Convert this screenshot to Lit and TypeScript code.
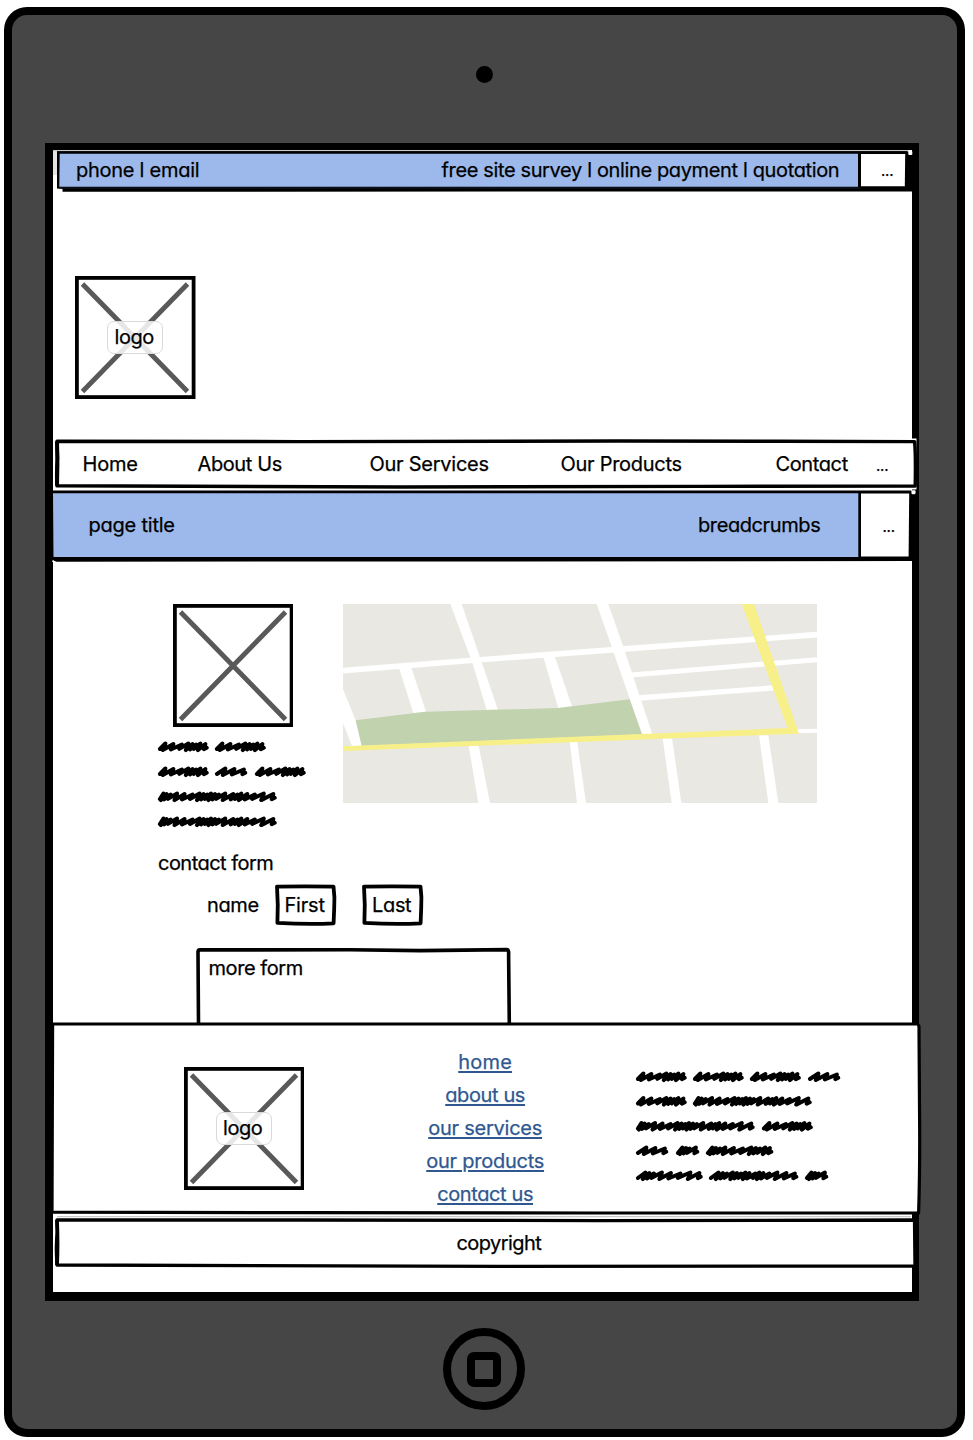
import { LitElement, html, svg, css } from "lit";
import { customElement, property } from "lit/decorators.js";

/* One line of wireframe text, spaced so that it fills the given width. */
@customElement("wf-label")
class WfLabel extends LitElement {
  @property() text = "";
  @property({ type: Number }) w = 0;
  @property({ type: Boolean }) link = false;

  static styles = css`
    :host {
      display: block;
      flex: none;
      font-family: Inter, "Open Sans", sans-serif;
      font-feature-settings: "cv11", "calt" 0;
      font-size: 20px;
      line-height: 24px;
      white-space: pre;
      -webkit-text-stroke: 0.25px currentColor;
    }
    .text {
      display: inline-block;
      vertical-align: top;
    }
    .link {
      text-decoration: underline;
      text-decoration-thickness: 1.6px;
      text-underline-offset: 1.8px;
    }
  `;

  render() {
    return html`<span class="text ${this.link ? "link" : ""}">${this.text}</span>`;
  }

  updated() {
    const span = this.renderRoot.querySelector(".text") as HTMLElement;
    span.style.letterSpacing = "0px";
    const natural = span.getBoundingClientRect().width;
    const gap = (this.w + 0.3 - natural) / this.text.length;
    span.style.letterSpacing = `${gap.toFixed(3)}px`;
    this.style.width = `${this.w}px`;
  }
}

/* Crossed image placeholder with an optional caption. */
@customElement("wf-image")
class WfImage extends LitElement {
  @property() caption = "";

  static styles = css`
    :host {
      display: grid;
      flex: none;
      width: 120.5px;
      height: 123px;
      place-items: center;
    }
    .art,
    .tag {
      grid-area: 1 / 1;
    }
    .art {
      display: block;
    }
    .tag {
      box-sizing: border-box;
      width: 56px;
      height: 33px;
      margin: 0 0.5px 0 0;
      padding: 3px 0 0 6.5px;
      border: 1.5px solid #d9d9d9;
      border-radius: 7px;
      background: rgba(255, 255, 255, 0.85);
    }
  `;

  render() {
    return html`
      <svg class="art" width="120.5" height="123" viewBox="0 0 120.5 123">
        <rect x="1.9" y="1.9" width="116.7" height="119.2" fill="#fff" stroke="#000" stroke-width="3.8" />
        <path d="M7.5 8L112.5 115.5M112.5 8L7.5 115.5" stroke="#595959" stroke-width="4.9" />
      </svg>
      ${this.caption
        ? html`<div class="tag"><wf-label text=${this.caption} .w=${39}></wf-label></div>`
        : ""}
    `;
  }
}

/* Spacing between successive pen strokes for each scribbled word length. */
const WORDS: Record<string, number[]> = {
  xs: [8, 3.6, 3.6, 6.3],
  s: [12, 9, 9.5],
  m: [9, 8, 8.5, 6.5, 4.2, 3.6, 4.2, 5],
  l: [11, 4, 4.5, 8, 9, 9.5, 10, 9],
  xl: [8, 3.5, 4, 5.5, 8.5, 9, 8.5, 4.5, 4, 5.5, 4.5],
  xxl: [11, 4.5, 4, 6, 4, 4, 4.5, 4, 6, 4, 4, 6, 8, 9, 8.5],
  xxxl: [7, 3.2, 4, 6.5, 7.5, 8, 7, 4, 3.6, 3.8, 4, 3.8, 6.5, 8, 4, 4, 6, 7.5, 9, 9.5],
};

const scribble = (kind: string, x: number, y: number) => {
  const base = y - 0.2;
  let peak = x;
  let d = `M${x + 1.9} ${base + 2.2}`;
  WORDS[kind].forEach((step, i) => {
    peak += step;
    const tip = peak - 1.6;
    const top = base - 3.3 + ((i * 7) % 3) * 0.5;
    const low = base + 2.1 + ((i * 5) % 3) * 0.6;
    if (i > 0) {
      const back = Math.max(x + 2.2, tip - step - 2.6);
      d += `Q${tip - step - 0.5} ${base} ${back} ${low}`;
    }
    d += `L${tip} ${top}`;
  });
  d += `L${peak - 3.2} ${base + 2.4}L${peak - 0.2} ${base + 1}`;
  return svg`<path d=${d} />`;
};

@customElement("app-root")
class AppRoot extends LitElement {
  static styles = css`
    :host {
      display: block;
      width: 973px;
      height: 1440px;
      overflow: hidden;
      background: #fff;
      color: #000;
    }
    .device {
      box-sizing: border-box;
      display: flex;
      flex-direction: column;
      align-items: flex-start;
      width: 960.5px;
      height: 1430px;
      margin: 7px 0 0 4px;
      border: 8px solid #000;
      border-radius: 23px;
      background: #464646;
    }
    .top {
      box-sizing: border-box;
      height: 128px;
      padding: 51px 0 0 463.5px;
    }
    .camera {
      width: 17px;
      height: 17px;
      border-radius: 50%;
      background: #000;
    }
    .screen {
      box-sizing: border-box;
      flex: none;
      display: flex;
      flex-direction: column;
      align-items: flex-start;
      width: 873.5px;
      height: 1158px;
      margin-left: 33px;
      border: solid #000;
      border-width: 7px 7.5px 9px 8px;
      background: #fff;
    }
    .bottom {
      padding: 27px 0 0 431px;
    }
    .home {
      box-sizing: border-box;
      display: grid;
      place-items: center;
      width: 82px;
      height: 82px;
      border: 8px solid #000;
      border-radius: 50%;
    }
    .square {
      box-sizing: border-box;
      width: 34px;
      height: 35px;
      border: 8px solid #000;
      border-radius: 7px;
    }
    .stack {
      flex: none;
      display: grid;
      width: 868px;
    }
    .stack > * {
      grid-area: 1 / 1;
    }
    .art {
      display: block;
      overflow: visible;
    }
    .map {
      overflow: hidden;
    }
    .row {
      display: flex;
      align-items: flex-start;
    }
    .util {
      padding: 8px 0 0 23px;
    }
    .util .right {
      margin-left: 242.5px;
    }
    .dots {
      font-size: 15px;
    }
    .util .dots {
      margin-left: 42px;
      padding-top: 1px;
    }
    .header {
      flex: none;
      height: 247px;
      padding: 84px 0 0 22px;
      box-sizing: border-box;
    }
    .nav {
      padding: 13px 0 0 29.5px;
    }
    .n1 { margin-left: 60px; }
    .n2 { margin-left: 88px; }
    .n3 { margin-left: 72px; }
    .n4 { margin-left: 94px; }
    .nav .dots { margin-left: 28.5px; padding-top: 2px; }
    .title {
      padding: 24px 0 0 35.5px;
    }
    .title .right { margin-left: 523.5px; }
    .title .dots { margin-left: 62.5px; padding-top: 2px; }
    .main {
      box-sizing: border-box;
      flex: none;
      height: 460px;
      padding: 42px 0 0 105px;
    }
    .media {
      gap: 37px;
    }
    .about wf-image {
      margin-left: 14.5px;
    }
    .about {
      width: 148px;
    }
    .contact {
      margin-top: 15px;
    }
    .names {
      margin: 9px 0 0 49px;
      align-items: flex-start;
    }
    .names > wf-label {
      padding-top: 9px;
    }
    .field {
      display: grid;
      width: 61px;
      height: 42px;
    }
    .field > * {
      grid-area: 1 / 1;
    }
    .field wf-label {
      padding: 9px 0 0 10px;
    }
    .first { margin-left: 16px; }
    .last { margin-left: 26.5px; }
    .more {
      display: grid;
      width: 315px;
      margin: 21px 0 0 38px;
    }
    .more > * {
      grid-area: 1 / 1;
    }
    .more wf-label {
      padding: 9px 0 0 12.5px;
    }
    .footer {
      padding: 44.5px 0 0 130.5px;
    }
    .links {
      display: flex;
      flex-direction: column;
      align-items: center;
      width: 118px;
      gap: 9px;
      margin: -16.5px 0 0 122px;
      color: #2f5890;
    }
    .address {
      margin: -0.5px 0 0 91.5px;
    }
    .pen {
      fill: none;
      stroke: #000;
      stroke-width: 4;
      stroke-linecap: round;
      stroke-linejoin: round;
    }
    .copy {
      padding: 13px 0 0 403.5px;
    }
  `;

  private utilityBar() {
    return html`<div class="stack">
      <svg class="art" width="868" height="42" viewBox="53 150 868 42">
        <path d="M53 150H57V175H53Z" fill="#e4e4e4" />
        <path d="M57 151H907L912 154V191.5L62.5 191.7V189L57 188.5Z" fill="#000" />
        <path d="M53 150.6H909" stroke="#b5b5b5" stroke-width="0.8" />
        <path d="M59.7 153.8H858V186.8H59.3Z" fill="#9db9eb" />
        <path d="M861 154H905.2L904.8 186.3H861Z" fill="#fff" />
        <path d="M59 188H860" stroke="#22304a" stroke-width="0.6" />
        <rect x="908.3" y="151" width="4" height="4" rx="1" fill="#fff" />
      </svg>
      <div class="row util">
        <wf-label text="phone l email" .w=${123}></wf-label>
        <wf-label class="right" text="free site survey l online payment l quotation" .w=${397.5}></wf-label>
        <wf-label class="dots" text="..." .w=${12}></wf-label>
      </div>
    </div>`;
  }

  private navBar() {
    return html`<div class="stack">
      <svg class="art" width="868" height="50" viewBox="53 439 868 50">
        <path d="M906 438.5H916.5V489.5H906Z" fill="#fff" />
        <path
          d="M57 441.2L300 441.6L620 441L780 441.3L914.6 441.6Q915.8 455 915.2 486L700 486.4L400 487L57 485.8Q56 470 57.6 458Z"
          fill="#fff" stroke="#000" stroke-width="3.4" stroke-linejoin="round" />
        <path d="M57 441.5Q57.8 464 57 485.5" fill="none" stroke="#000" stroke-width="4" />
      </svg>
      <div class="row nav">
        <wf-label text="Home" .w=${55}></wf-label>
        <wf-label class="n1" text="About Us" .w=${84}></wf-label>
        <wf-label class="n2" text="Our Services" .w=${119}></wf-label>
        <wf-label class="n3" text="Our Products" .w=${121}></wf-label>
        <wf-label class="n4" text="Contact" .w=${72}></wf-label>
        <wf-label class="dots" text="..." .w=${12}></wf-label>
      </div>
    </div>`;
  }

  private titleBar() {
    return html`<div class="stack">
      <svg class="art" width="868" height="73" viewBox="53 489 868 73">
        <path d="M52 490.4H911L916.5 495L917 561H912L56 561.8L51 559Z" fill="#000" />
        <path d="M53 493.2H858.3V557H53.5Z" fill="#9db9eb" />
        <path d="M861 493.5H909.2L908.6 556.6H861Z" fill="#fff" />
        <rect x="911.5" y="490.3" width="4" height="4" rx="1" fill="#fff" />
        <path d="M52 560.5L57 561.8H52Z" fill="#fff" />
      </svg>
      <div class="row title">
        <wf-label text="page title" .w=${86}></wf-label>
        <wf-label class="right" text="breadcrumbs" .w=${122}></wf-label>
        <wf-label class="dots" text="..." .w=${12}></wf-label>
      </div>
    </div>`;
  }

  private map() {
    return html`<svg class="art map" width="474" height="199" viewBox="24 27 1422 597" preserveAspectRatio="none">
      <rect x="24" y="27" width="1422" height="597" fill="#eae8e3" />
      <g fill="#fff">
        <path d="M346 27H380L435 187L489 345H455L413 206Z" />
        <path d="M785 27H820L865 155L953 420H922L830 155Z" />
        <path d="M192 218H229L273 350L235 354Z" />
        <path d="M624 183H659L711 334L670 340Z" />
        <path d="M24 282L62 376L82 455H52L24 385Z" />
        <path d="M401 452H431L465 624H430Z" />
        <path d="M704 438H726L753 624H726Z" />
        <path d="M983 430H1011L1039 624H1010Z" />
        <path d="M1272 421H1300L1330 624H1300Z" />
      </g>
      <g fill="none" stroke="#fff">
        <path d="M24 227L425 195L850 163L1446 119" stroke-width="17" />
        <path d="M890 240L1446 194" stroke-width="15" />
        <path d="M912 309L1325 278" stroke-width="16" />
        <path d="M1385 409L1446 407" stroke-width="12" />
      </g>
      <path d="M62 376L271 350L670 339L711 334L884 313L921 418L80 453Z" fill="#c0d3ae" />
      <path d="M24 454L1358 399L1220 27H1257L1392 416L960 432L24 468Z" fill="#f7ef88" />
    </svg>`;
  }

  private field(cls: string, text: string, w: number) {
    return html`<div class="field ${cls}">
      <svg class="art" width="61" height="42" viewBox="0 0 61 42">
        <path d="M2 2.6L30 2.4L58.5 2.6Q60 14 59.2 24L58.6 39.3Q34 40.6 2.4 38.9Q3.4 22 2 2.6Z"
          fill="#fff" stroke="#000" stroke-width="3.8" stroke-linejoin="round" />
      </svg>
      <wf-label text=${text} .w=${w}></wf-label>
    </div>`;
  }

  render() {
    return html`<div class="device">
      <div class="top"><div class="camera"></div></div>
      <div class="screen">
        ${this.utilityBar()}
        <div class="header"><wf-image caption="logo"></wf-image></div>
        ${this.navBar()} ${this.titleBar()}
        <div class="main">
          <div class="row media">
            <div class="about">
              <wf-image></wf-image>
              <svg class="art pen" width="148" height="109" viewBox="158 727 148 109">
                ${scribble("m", 158, 747)} ${scribble("m", 215, 747)}
                ${scribble("m", 158, 772)} ${scribble("s", 215, 772)} ${scribble("m", 255, 772)}
                ${scribble("xxxl", 158, 797)} ${scribble("xxxl", 158, 822)}
              </svg>
            </div>
            ${this.map()}
          </div>
          <wf-label class="contact" text="contact form" .w=${115}></wf-label>
          <div class="row names">
            <wf-label text="name" .w=${51.5}></wf-label>
            ${this.field("first", "First", 40)} ${this.field("last", "Last", 39)}
          </div>
          <div class="more">
            <svg class="art" width="315" height="77" viewBox="196 947 315 77">
              <path d="M198.5 1024L198 952Q198 950 200 949.9L350 949.8L420 950.6L507 949.6Q509 949.6 508.6 955L509.3 1024"
                fill="none" stroke="#000" stroke-width="3.6" />
            </svg>
            <wf-label text="more form" .w=${94}></wf-label>
          </div>
        </div>
        <div class="stack">
          <svg class="art" width="868" height="196" viewBox="53 1022 868 196">
            <path d="M52.6 1024H917Q919.4 1024 919 1030L919.6 1120Q920 1170 918.6 1213L600 1213L300 1212.7L52 1212.2Z"
              fill="#fff" stroke="#000" stroke-width="3.2" stroke-linejoin="round" />
            <path d="M57 1216.7H911" stroke="#aaa" stroke-width="0.8" />
          </svg>
          <div class="row footer">
            <wf-image caption="logo"></wf-image>
            <div class="links">
              <wf-label link text="home" .w=${53.5}></wf-label>
              <wf-label link text="about us" .w=${79.5}></wf-label>
              <wf-label link text="our services" .w=${113.5}></wf-label>
              <wf-label link text="our products" .w=${117.5}></wf-label>
              <wf-label link text="contact us" .w=${95.5}></wf-label>
            </div>
            <svg class="art pen address" width="206" height="120" viewBox="635 1066 206 120">
              ${scribble("m", 635, 1077)} ${scribble("m", 692, 1077)} ${scribble("m", 749, 1077)} ${scribble("s", 807, 1077)}
              ${scribble("m", 635, 1101.5)} ${scribble("xxxl", 692, 1101.5)}
              ${scribble("xxxl", 635, 1126.5)} ${scribble("m", 761, 1126.5)}
              ${scribble("s", 635, 1151)} ${scribble("xs", 675, 1151)} ${scribble("xl", 705, 1151)}
              ${scribble("l", 635, 1176)} ${scribble("xxl", 708, 1176)} ${scribble("xs", 804, 1176)}
            </svg>
          </div>
        </div>
        <div class="stack">
          <svg class="art" width="868" height="51" viewBox="53 1218 868 51">
            <path d="M57 1220L300 1220L600 1220.6L914.5 1220L915 1266L500 1266.3L57 1265Q55.5 1244 57.4 1232Z"
              fill="#fff" stroke="#000" stroke-width="3.3" stroke-linejoin="round" />
            <path d="M57 1220Q58 1245 57 1265" fill="none" stroke="#000" stroke-width="3.8" />
          </svg>
          <div class="row copy"><wf-label text="copyright" .w=${84.5}></wf-label></div>
        </div>
      </div>
      <div class="bottom"><div class="home"><div class="square"></div></div></div>
    </div>`;
  }
}
